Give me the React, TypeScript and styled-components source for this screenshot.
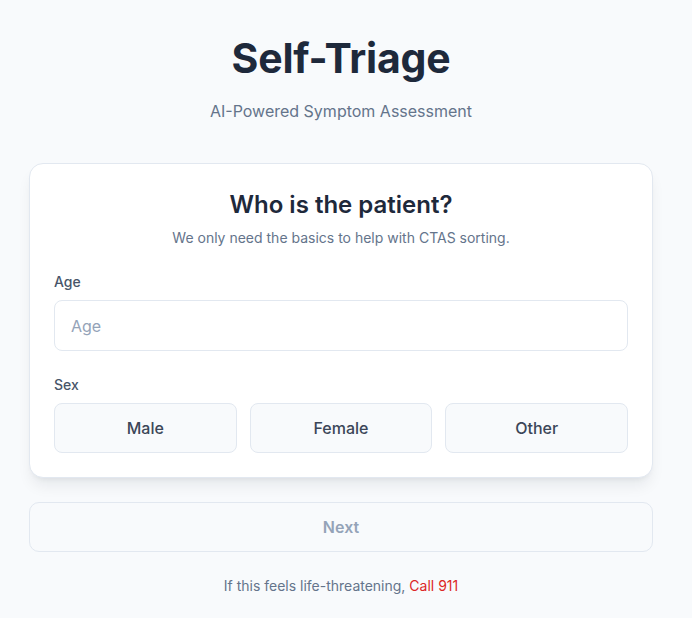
import React, { useState } from 'react';
import styled, { createGlobalStyle } from 'styled-components';

const GlobalStyle = createGlobalStyle`
	* {
		box-sizing: border-box;
	}
	body {
		margin: 0;
		background: #f8fafc;
		font-family: Inter, 'Noto Sans', sans-serif;
		color: #1e293b;
	}
`;

const Page = styled.main`
	width: 624px;
	margin-left: 29px;
	padding: 33px 0 0;
`;

const Header = styled.header`
	text-align: center;
	margin-bottom: 40px;
`;

const Title = styled.h1`
	margin: 0;
	font-size: 41px;
	line-height: 50px;
	font-weight: 700;
	color: #1e293b;
	letter-spacing: -0.005em;
`;

const Subtitle = styled.p`
	margin: 16px 0 0;
	font-size: 16px;
	line-height: 24px;
	color: #64748b;
`;

const Card = styled.section`
	background: #fff;
	border: 1px solid #e2e8f0;
	border-radius: 14px;
	box-shadow: 0 10px 15px -3px rgba(15, 23, 42, 0.08), 0 4px 6px -4px rgba(15, 23, 42, 0.08);
	padding: 25px 24px 24px;
`;

const CardTitle = styled.h2`
	margin: 0;
	text-align: center;
	font-size: 24px;
	line-height: 32px;
	font-weight: 600;
	color: #1e293b;
`;

const CardText = styled.p`
	margin: 7px 0 0;
	text-align: center;
	font-size: 14px;
	line-height: 20px;
	color: #64748b;
`;

const Field = styled.div`
	margin-top: 24px;
	display: flex;
	flex-direction: column;
	gap: 8px;
`;

const Label = styled.label`
	font-size: 14px;
	line-height: 20px;
	font-weight: 500;
	color: #475569;
`;

const Input = styled.input`
	height: 51px;
	width: 100%;
	border: 1px solid #e2e8f0;
	border-radius: 8px;
	padding: 0 16px;
	font-family: inherit;
	font-size: 16px;
	color: #1e293b;
	background: #fff;
	outline: none;

	&::placeholder {
		color: #94a3b8;
	}
`;

const Options = styled.div`
	display: grid;
	grid-template-columns: repeat(3, 1fr);
	gap: 13px;
`;

const Option = styled.button<{ selected: boolean }>`
	height: 50px;
	border-radius: 8px;
	border: 1px solid ${({ selected }) => (selected ? '#2563eb' : '#e2e8f0')};
	background: ${({ selected }) => (selected ? '#eff6ff' : '#f8fafc')};
	font-family: inherit;
	font-size: 16px;
	font-weight: 500;
	color: #3b4658;
	cursor: pointer;
`;

const NextButton = styled.button`
	margin-top: 24px;
	width: 100%;
	height: 50px;
	border: 1px solid #e2e8f0;
	border-radius: 10px;
	background: #f8fafc;
	font-family: inherit;
	font-size: 16px;
	font-weight: 600;
	color: #94a3b8;
	cursor: not-allowed;
`;

const Footer = styled.p`
	margin: 24px 0 0;
	text-align: center;
	font-size: 14px;
	line-height: 20px;
	color: #64748b;
`;

const Emergency = styled.a`
	color: #dc2626;
	text-decoration: none;
`;

const App: React.FC = () => {
	const [age, setAge] = useState('');
	const [sex, setSex] = useState<string | null>(null);

	return (
		<>
			<GlobalStyle />
			<Page>
				<Header>
					<Title>Self-Triage</Title>
					<Subtitle>AI-Powered Symptom Assessment</Subtitle>
				</Header>
				<Card>
					<CardTitle>Who is the patient?</CardTitle>
					<CardText>We only need the basics to help with CTAS sorting.</CardText>
					<Field>
						<Label htmlFor='age'>Age</Label>
						<Input
							id='age'
							type='number'
							placeholder='Age'
							value={age}
							onChange={(e) => setAge(e.target.value)}
						/>
					</Field>
					<Field>
						<Label>Sex</Label>
						<Options>
							{['Male', 'Female', 'Other'].map((option) => (
								<Option
									key={option}
									selected={sex === option}
									onClick={() => setSex(option)}
								>
									{option}
								</Option>
							))}
						</Options>
					</Field>
				</Card>
				<NextButton disabled={!age || !sex}>Next</NextButton>
				<Footer>
					If this feels life-threatening, <Emergency href='tel:911'>Call 911</Emergency>
				</Footer>
			</Page>
		</>
	);
};

export default App;
